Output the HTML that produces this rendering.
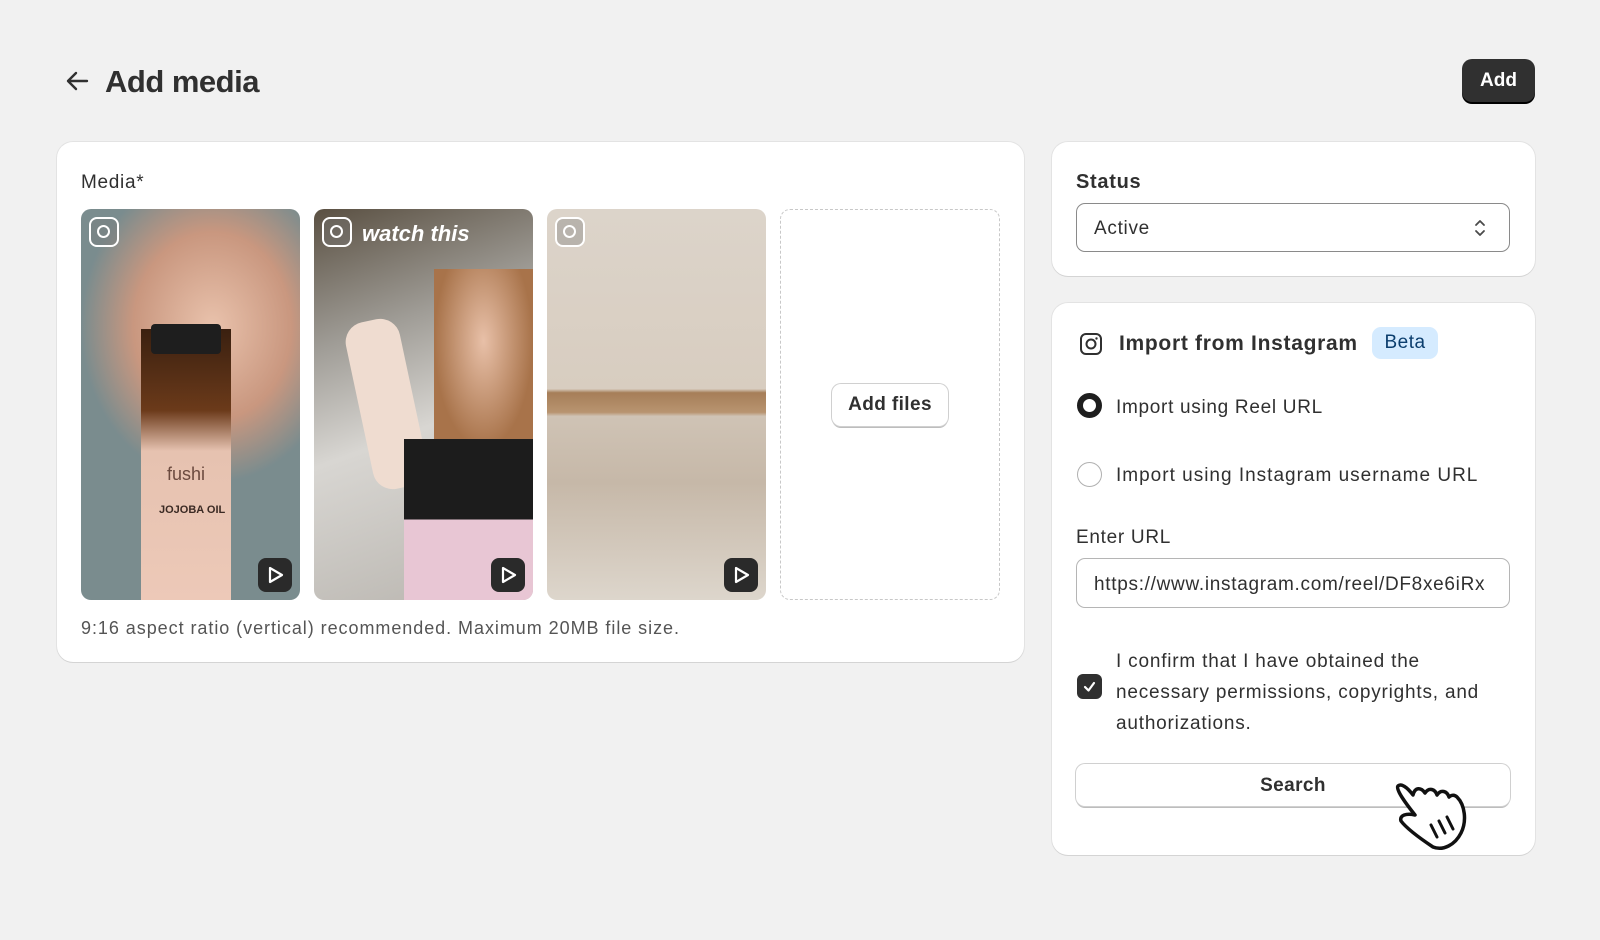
<!DOCTYPE html>
<html><head><style>
*{box-sizing:border-box;margin:0;padding:0}
body{width:1600px;height:940px;background:#f1f1f1;font-family:"Liberation Sans",sans-serif;color:#303030;position:relative;overflow:hidden}
.abs{position:absolute}
.card{position:absolute;background:#fff;border-radius:16px;box-shadow:0 1px 0 #d4d4d4,0 0 0 1px #e3e3e3}
.thumb{position:absolute;top:209px;height:391px;width:219px;border-radius:10px;overflow:hidden}
.ig{position:absolute;left:8px;top:8px;width:30px;height:30px;border:2.5px solid #fff;border-radius:8px;background:rgba(120,120,120,.35)}
.ig:after{content:"";position:absolute;left:6px;top:6px;width:9px;height:9px;border:2.5px solid #fff;border-radius:50%}
.play{position:absolute;right:8px;bottom:8px;width:34px;height:34px;background:#2a2a2a;border-radius:8px}
.play svg{position:absolute;left:7px;top:7px}
.t{position:absolute;font-size:19px;white-space:nowrap;letter-spacing:0.7px}
</style></head><body>
<svg class="abs" style="left:65px;top:70px" width="24" height="22" viewBox="0 0 24 22"><path d="M22 11H3M11 3L3 11l8 8" fill="none" stroke="#303030" stroke-width="2.4" stroke-linecap="round" stroke-linejoin="round"/></svg>
<div class="abs" style="left:105px;top:64px;font-size:31px;font-weight:bold;letter-spacing:-0.5px">Add media</div>
<div class="abs" style="left:1462px;top:59px;width:73px;height:43px;background:#303030;border-radius:10px;color:#fff;font-weight:bold;font-size:19px;text-align:center;line-height:43px;box-shadow:0 2px 0 #000">Add</div>

<div class="card" style="left:57px;top:142px;width:967px;height:520px"></div>
<div class="t" style="left:81px;top:172px">Media*</div>
<div class="thumb" style="left:81px;background:radial-gradient(ellipse 60% 40% at 60% 30%,#e9c2ac,#c9977f 60%,#7a8c8e 100%)">
 <div class="abs" style="left:60px;top:120px;width:90px;height:271px;background:linear-gradient(#3a2010,#6b3a1a 30%,#e6c2b0 45%,#edc9b8)"></div>
 <div class="abs" style="left:70px;top:115px;width:70px;height:30px;background:#1e1e1e;border-radius:4px"></div>
 <div class="abs" style="left:86px;top:255px;font-size:18px;color:#6b4a3f">fushi</div>
 <div class="abs" style="left:78px;top:295px;font-size:11px;font-weight:bold;color:#3b2a24">JOJOBA OIL</div>
 <div class="ig"></div><div class="play"><svg width="20" height="20"><path d="M5 3L17 10L5 17Z" fill="none" stroke="#fff" stroke-width="2.2" stroke-linejoin="round"/></svg></div></div>
<div class="thumb" style="left:314px;background:linear-gradient(160deg,#5a5042 0%,#9f9c96 30%,#d8d6d2 55%,#b8b4ae 100%)">
 <div class="abs" style="left:120px;top:60px;width:99px;height:180px;background:radial-gradient(ellipse at 50% 40%,#e8c0a8,#a8734a 70%)"></div>
 <div class="abs" style="left:45px;top:110px;width:55px;height:170px;background:#efdcd0;border-radius:20px;transform:rotate(-12deg)"></div>
 <div class="abs" style="left:90px;top:230px;width:129px;height:161px;background:linear-gradient(#1c1c1c 50%,#e8c6d4 50%)"></div>
 <div class="abs" style="left:48px;top:12px;color:#fff;font-weight:bold;font-style:italic;font-size:22px">watch this</div>
 <div class="ig"></div><div class="play"><svg width="20" height="20"><path d="M5 3L17 10L5 17Z" fill="none" stroke="#fff" stroke-width="2.2" stroke-linejoin="round"/></svg></div></div>
<div class="thumb" style="left:547px;background:linear-gradient(#dcd4ca 0%,#d8cdc0 46%,#a67e58 47%,#b89470 52%,#cfc3b5 53%,#c6b8a8 70%,#ddd6cc 100%)">
 <div class="ig"></div><div class="play"><svg width="20" height="20"><path d="M5 3L17 10L5 17Z" fill="none" stroke="#fff" stroke-width="2.2" stroke-linejoin="round"/></svg></div></div>
<div class="abs" style="left:780px;top:209px;width:220px;height:391px;border:1px dashed #c8c8c8;border-radius:10px"></div>
<div class="abs" style="left:832px;top:384px;width:116px;height:42px;border-radius:9px;background:#fff;box-shadow:0 0 0 1px #d0d0d0,0 2px 0 #bdbdbd;font-weight:bold;font-size:19px;text-align:center;line-height:42px;letter-spacing:0.4px">Add files</div>
<div class="t" style="left:81px;top:618px;color:#555;font-size:18px;letter-spacing:0.95px">9:16 aspect ratio (vertical) recommended. Maximum 20MB file size.</div>

<div class="card" style="left:1052px;top:142px;width:483px;height:134px"></div>
<div class="t" style="left:1076px;top:171px;font-weight:bold;font-size:20px">Status</div>
<div class="abs" style="left:1076px;top:203px;width:434px;height:49px;border:1px solid #8a8a8a;border-radius:9px"></div>
<div class="t" style="left:1094px;top:218px">Active</div>
<svg class="abs" style="left:1473px;top:217px" width="14" height="22"><path d="M3 8L7 4L11 8M3 14L7 18L11 14" fill="none" stroke="#4a4a4a" stroke-width="1.8" stroke-linecap="round" stroke-linejoin="round"/></svg>

<div class="card" style="left:1052px;top:303px;width:483px;height:552px"></div>
<svg class="abs" style="left:1079px;top:332px" width="24" height="24"><rect x="2" y="2" width="20" height="20" rx="5" fill="none" stroke="#303030" stroke-width="2"/><circle cx="12" cy="12" r="4.5" fill="none" stroke="#303030" stroke-width="2"/><circle cx="17.5" cy="6.5" r="1.2" fill="#303030"/></svg>
<div class="t" style="left:1119px;top:332px;font-weight:bold;font-size:21px">Import from Instagram</div>
<div class="abs" style="left:1372px;top:327px;width:66px;height:32px;background:#d5ebff;border-radius:9px;color:#0b3e6e;font-size:19px;text-align:center;line-height:32px;letter-spacing:0.5px">Beta</div>
<div class="abs" style="left:1077px;top:393px;width:25px;height:25px;border-radius:50%;border:6px solid #1e1e1e"></div>
<div class="t" style="left:1116px;top:397px">Import using Reel URL</div>
<div class="abs" style="left:1077px;top:462px;width:25px;height:25px;border-radius:50%;border:1px solid #b0b0b0"></div>
<div class="t" style="left:1116px;top:465px;letter-spacing:1px">Import using Instagram username URL</div>
<div class="t" style="left:1076px;top:527px">Enter URL</div>
<div class="abs" style="left:1076px;top:558px;width:434px;height:50px;border:1px solid #b5b5b5;border-radius:9px"></div>
<div class="t" style="left:1094px;top:574px;width:396px;overflow:hidden">https://www.instagram.com/reel/DF8xe6iRx</div>
<div class="abs" style="left:1077px;top:674px;width:25px;height:25px;border-radius:6px;background:#303030"></div>
<svg class="abs" style="left:1081px;top:678px" width="17" height="17"><path d="M4 9L7.5 12.5L13 5" fill="none" stroke="#fff" stroke-width="2.2" stroke-linecap="round" stroke-linejoin="round"/></svg>
<div class="t" style="left:1116px;top:646px;line-height:31px;letter-spacing:0.8px">I confirm that I have obtained the<br>necessary permissions, copyrights, and<br>authorizations.</div>
<div class="abs" style="left:1076px;top:764px;width:434px;height:42px;border-radius:9px;background:#fff;box-shadow:0 0 0 1px #d0d0d0,0 2px 0 #bdbdbd;font-weight:bold;font-size:19px;text-align:center;line-height:44px;letter-spacing:0.4px">Search</div>
<svg class="abs" style="left:1393px;top:775px" width="80" height="76" viewBox="0 0 80 76"><path d="M20 20C14 12 8 8 5 11C2 14 14 30 22 40C14 38 6 40 8 46C14 54 28 64 40 72C50 76 62 70 68 58C74 46 72 30 64 22C60 18 56 22 56 22C54 16 48 14 44 20C42 14 36 12 32 18C28 12 22 12 20 20Z" fill="#fff" stroke="#111" stroke-width="3.5" stroke-linejoin="round"/><path d="M38 50L44 62M46 46L52 58M54 42L60 54" stroke="#111" stroke-width="3" stroke-linecap="round"/></svg>
</body></html>
